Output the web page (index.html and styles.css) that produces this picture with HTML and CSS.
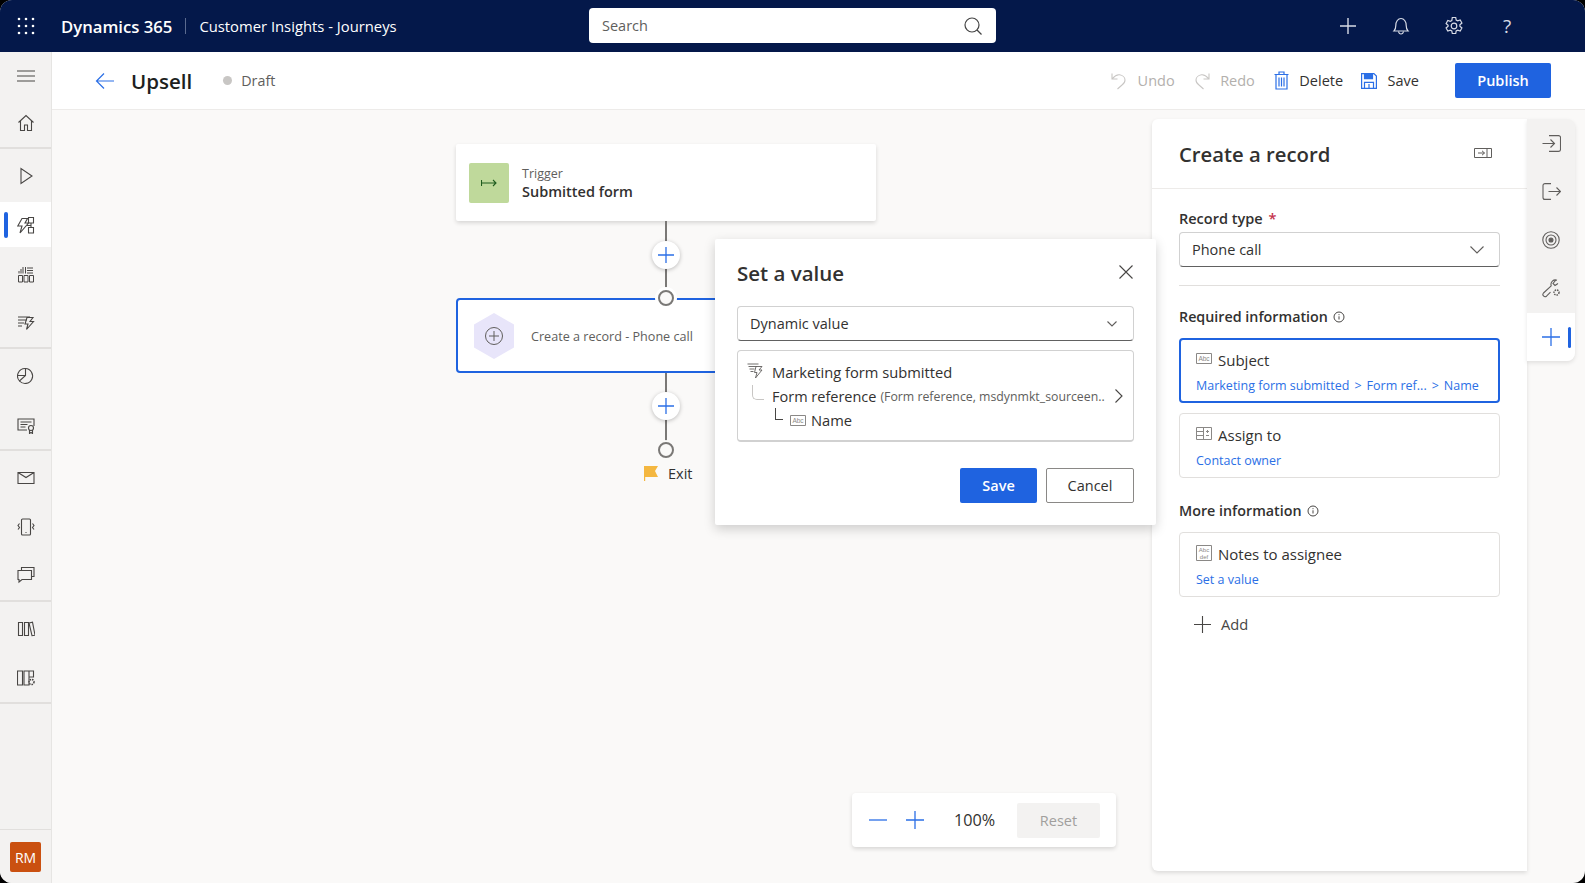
FILE: index.html
```html
<!DOCTYPE html>
<html lang="en">

<head>
    <meta charset="UTF-8">
    <title>Upsell - Customer Insights - Journeys</title>
    <link rel="stylesheet" href="styles.css">
</head>

<body>
    <div class="app">
        <header class="topbar">
            <svg class="waffle" width="18" height="18" viewBox="0 0 18 18" fill="#fff">
                <circle cx="2" cy="2" r="1.3"/><circle cx="9" cy="2" r="1.3"/><circle cx="16" cy="2" r="1.3"/>
                <circle cx="2" cy="9" r="1.3"/><circle cx="9" cy="9" r="1.3"/><circle cx="16" cy="9" r="1.3"/>
                <circle cx="2" cy="16" r="1.3"/><circle cx="9" cy="16" r="1.3"/><circle cx="16" cy="16" r="1.3"/>
            </svg>
            <span class="brand">Dynamics 365</span>
            <span class="brand-sep"></span>
            <span class="app-name">Customer Insights - Journeys</span>
            <div class="search">
                <span>Search</span>
                <svg width="20" height="20" viewBox="0 0 20 20" fill="none" stroke="#444" stroke-width="1.2"><circle cx="9" cy="9" r="7"/><path d="M14 14l4.500 4.500"/></svg>
            </div>
            <div class="top-actions">
                <svg width="20" height="20" viewBox="0 0 20 20" fill="none" stroke="#d8dbe6" stroke-width="1.4"><path d="M10 2v16M2 10h16"/></svg>
                <svg width="20" height="20" viewBox="0 0 20 20" fill="none" stroke="#d8dbe6" stroke-width="1.2"><path d="M3 15c1.500-1.500 1.800-3 1.800-5.500C4.800 5.500 7 2.500 10 2.500s5.200 3 5.200 7c0 2.500.3 4 1.800 5.500z"/><path d="M7.500 15.500c.3 1.500 1.200 2.500 2.500 2.500s2.200-1 2.500-2.500"/></svg>
                <svg width="20" height="20" viewBox="0 0 20 20" fill="none" stroke="#d8dbe6" stroke-width="1.2"><circle cx="10" cy="10" r="2.800"/><path d="M8.300 1.500h3.400l.5 2.600 1.500.8 2.500-.9 1.700 3-2 1.700v1.600l2 1.700-1.700 3-2.500-.9-1.500.8-.5 2.600H8.300l-.5-2.600-1.500-.8-2.500.9-1.700-3 2-1.700V9.200l-2-1.700 1.700-3 2.500.9 1.500-.8z"/></svg>
                <span class="help">?</span>
            </div>
        </header>

        <div class="workspace">
            <nav class="sidebar">
                <div class="nav-group nav-group-top">
                    <div class="nav-item nav-menu">
                        <svg width="18" height="12" viewBox="0 0 18 12" stroke="#484644" stroke-width="1.1"><path d="M0 1h18M0 6h18M0 11h18"/></svg>
                    </div>
                    <div class="nav-item">
                        <svg width="18" height="18" viewBox="0 0 18 18" fill="none" stroke="#484644" stroke-width="1.1"><path d="M1.500 8.500L9 1.500l7.500 7M3.500 7v9.500h4V11h3v5.500h4V7"/></svg>
                    </div>
                </div>
                <div class="nav-group">
                    <div class="nav-item">
                        <svg width="18" height="18" viewBox="0 0 18 18" fill="none" stroke="#484644" stroke-width="1.1"><path d="M4 1.500v15l11-7.500z"/></svg>
                    </div>
                    <div class="nav-item nav-active">
                        <svg width="18" height="18" viewBox="0 0 18 18" fill="none" stroke="#484644" stroke-width="1.1"><path d="M5 2.500h5.500L8 7h3.500L3 17l2-7H.8z"/><path d="M11.500 1.500h5V7h-5zM11.500 11.500h5V17h-5zM14 7v4.500M10 9.500h4"/></svg>
                    </div>
                    <div class="nav-item">
                        <svg width="18" height="18" viewBox="0 0 18 18" fill="none" stroke="#484644" stroke-width="1"><path d="M1.500 10.500h4v6.500h-4zM7 10.500h4v6.500H7zM12.500 10.500h4v6.500h-4zM2 8.500V6M4 8.500V4M6 8.500V2M8.500 2v6.500M10 3h6M10 5.500h6M10 8h6"/></svg>
                    </div>
                    <div class="nav-item">
                        <svg width="18" height="18" viewBox="0 0 18 18" fill="none" stroke="#484644" stroke-width="1.1"><path d="M1 3h12M1 6h9M1 9h6M1 12h4M10 3.500h6l-3 4h3.500l-7 8 1.500-5.500H8z"/></svg>
                    </div>
                </div>
                <div class="nav-group">
                    <div class="nav-item">
                        <svg width="18" height="18" viewBox="0 0 18 18" fill="none" stroke="#484644" stroke-width="1.1"><path d="M8.500 1.500a7.500 7.500 0 1 1-6 12.500"/><path d="M8.500 1.500v7L2.500 14A7.500 7.500 0 0 1 8.500 1.500zM1 8.500h7.500"/></svg>
                    </div>
                    <div class="nav-item">
                        <svg width="18" height="18" viewBox="0 0 18 18" fill="none" stroke="#484644" stroke-width="1.1"><path d="M10 14H1V3h16v7M3.500 6h11M3.500 8.500h7M3.500 11h5"/><circle cx="14" cy="12" r="2.500"/><path d="M12.500 14v3.500l1.500-1 1.500 1V14"/></svg>
                    </div>
                </div>
                <div class="nav-group">
                    <div class="nav-item">
                        <svg width="18" height="18" viewBox="0 0 18 18" fill="none" stroke="#484644" stroke-width="1.1"><path d="M1 3.500h16v11H1zM1 3.500l8 5 8-5"/></svg>
                    </div>
                    <div class="nav-item">
                        <svg width="18" height="18" viewBox="0 0 18 18" fill="none" stroke="#484644" stroke-width="1.1"><rect x="4.500" y="1" width="9" height="16" rx="1"/><path d="M8.500 14.500h1M2.500 5.500L1 7.500l1.500 2-1.500 2M15.500 5.500l1.500 2-1.500 2 1.500 2"/></svg>
                    </div>
                    <div class="nav-item">
                        <svg width="18" height="18" viewBox="0 1.500 18 18" fill="none" stroke="#484644" stroke-width="1.1"><path d="M4.500 5V2H17v9h-2.500"/><path d="M1 5h13.500v9H5l-3 2.500V14H1z"/></svg>
                    </div>
                </div>
                <div class="nav-group">
                    <div class="nav-item">
                        <svg width="18" height="18" viewBox="0 0 18 18" fill="none" stroke="#484644" stroke-width="1.1"><path d="M1.500 2.500h4v13h-4zM7.500 2.500h4v13h-4zM12 3l3.500-.8 2.500 13-3 .5z"/></svg>
                    </div>
                    <div class="nav-item">
                        <svg width="18" height="18" viewBox="0 0 18 18" fill="none" stroke="#484644" stroke-width="1.1"><path d="M.5 2h5v14h-5zM7 2h5v14H7zM12 2h4.500v6H12z"/><circle cx="14.500" cy="13" r="2.500" stroke-width="1.500" stroke-dasharray="1.500 .9"/></svg>
                    </div>
                </div>
                <div class="nav-spacer"></div>
                <div class="nav-user"><span class="avatar">RM</span></div>
            </nav>

            <main class="main">
                <div class="page-header">
                    <svg class="back" width="20" height="18" viewBox="0 0 20 18" fill="none" stroke="#2b6fe6" stroke-width="1.200"><path d="M19 9H1.500M9 1.500L1.500 9 9 16.500"/></svg>
                    <h1 class="page-title">Upsell</h1>
                    <span class="status-dot"></span>
                    <span class="status">Draft</span>
                    <div class="commands">
                        <span class="cmd cmd-off">
                            <svg width="16" height="18" viewBox="0 0 16 18" fill="none" stroke="#c8c6c4" stroke-width="1.1"><path d="M1 1.500v5.500h5.500M1.500 6.500C4 3.500 6 2.500 8.500 2.800c3 .4 5.500 2.500 5.500 5.200 0 2.500-1.500 4-3 5l-4.500 4"/></svg>
                            Undo
                        </span>
                        <span class="cmd cmd-off">
                            <svg width="16" height="18" viewBox="0 0 16 18" fill="none" stroke="#c8c6c4" stroke-width="1.1"><path d="M15 1.500v5.500H9.500M14.500 6.500C12 3.500 10 2.500 7.500 2.800 4.500 3.200 2 5.300 2 8c0 2.500 1.500 4 3 5l4.500 4"/></svg>
                            Redo
                        </span>
                        <span class="cmd">
                            <svg width="15" height="19" viewBox="0 0 15 19" fill="none" stroke="#2b6fe6" stroke-width="1.2"><path d="M.5 3.500h14M5 3.500V1h5v2.500M2 3.500v14.500h11V3.500M5 6.500v9M7.500 6.500v9M10 6.500v9"/></svg>
                            Delete
                        </span>
                        <span class="cmd">
                            <svg width="16" height="16" viewBox="0 0 16 16" fill="none" stroke="#2b6fe6" stroke-width="1.2"><path d="M.6.600h12.300l2.500 2.500v12.300H.6z"/><path d="M3.500.6v5h8v-5" fill="#2b6fe6"/><path d="M3.500 15.400v-6h9v6M8 11v4"/></svg>
                            Save
                        </span>
                        <button class="btn-primary btn-publish">Publish</button>
                    </div>
                </div>

                <div class="canvas">
                    <section class="flow">
                        <div class="node node-trigger">
                            <span class="trigger-icon">
                                <svg width="16" height="8" viewBox="0 0 16 8" fill="none" stroke="#1f5c1f" stroke-width="1.100"><path d="M.5 1v6M1 4h14M12 1l3 3-3 3"/></svg>
                            </span>
                            <div>
                                <div class="node-kicker">Trigger</div>
                                <div class="node-title">Submitted form</div>
                            </div>
                        </div>
                        <div class="node node-action">
                            <svg class="hex" width="40" height="46" viewBox="0 0 40 46">
                                <path d="M20 0l20 11.500v23L20 46 0 34.500v-23z" fill="#e8e5fa"/>
                                <circle cx="20" cy="23" r="8.500" fill="none" stroke="#605e5c" stroke-width="1"/>
                                <path d="M20 18v10M15 23h10" stroke="#605e5c" stroke-width="1"/>
                            </svg>
                            <span class="node-label">Create a record - Phone call</span>
                        </div>
                        <span class="line line-1"></span>
                        <span class="line line-2"></span>
                        <span class="add-step step-1"><svg width="16" height="16" viewBox="0 0 16 16" stroke="#2b6fe6" stroke-width="1.300"><path d="M8 0v16M0 8h16"/></svg></span>
                        <span class="add-step step-2"><svg width="16" height="16" viewBox="0 0 16 16" stroke="#2b6fe6" stroke-width="1.300"><path d="M8 0v16M0 8h16"/></svg></span>
                        <span class="ring ring-1"></span>
                        <span class="ring ring-2"></span>
                        <div class="exit">
                            <svg width="15" height="15" viewBox="0 0 15 15"><path d="M0 0h14l-3 5 3 6H1.200v4H0z" fill="#f4b740"/></svg>
                            <span>Exit</span>
                        </div>
                        <div class="zoom-bar">
                            <svg width="18" height="2" viewBox="0 0 18 2" stroke="#2b6fe6" stroke-width="1.300"><path d="M0 1h18"/></svg>
                            <svg class="zoom-plus" width="18" height="18" viewBox="0 0 18 18" stroke="#2b6fe6" stroke-width="1.300"><path d="M9 0v18M0 9h18"/></svg>
                            <span class="zoom-value">100%</span>
                            <span class="zoom-reset">Reset</span>
                        </div>
                    </section>

                    <aside class="panel">
                        <div class="panel-head">
                            <h2>Create a record</h2>
                            <svg class="panel-expand" width="18" height="10" viewBox="0 0 18 10" fill="none" stroke="#605e5c" stroke-width="1"><path d="M.5.500h17v9H.5zM13 .5v9M4 5h6.500M8 2.800L10.500 5 8 7.200"/></svg>
                        </div>
                        <div class="panel-body">
                            <label class="field-label">Record type <em>*</em></label>
                            <div class="select select-record">
                                <span>Phone call</span>
                                <svg width="14" height="8" viewBox="0 0 14 8" fill="none" stroke="#605e5c" stroke-width="1.100"><path d="M.5.500L7 7l6.500-6.500"/></svg>
                            </div>
                            <hr class="panel-rule">
                            <h3 class="section-title">Required information
                                <svg width="12" height="12" viewBox="0 0 12 12" fill="none" stroke="#484644"><circle cx="6" cy="6" r="5"/><path d="M6 5.300v3.200M6 3.200v1"/></svg>
                            </h3>
                            <div class="param param-selected">
                                <div class="param-name">
                                    <svg width="16" height="11" viewBox="0 0 16 11" fill="none" stroke="#8a8886"><path d="M.5.500h15v10H.5z"/><text x="8" y="8" font-size="6.500" text-anchor="middle" fill="#8a8886" stroke="none" font-family="Liberation Sans">Abc</text></svg>
                                    Subject
                                </div>
                                <div class="param-value">Marketing form submitted<span class="crumb-sep">&gt;</span>Form ref...<span class="crumb-sep">&gt;</span>Name</div>
                            </div>
                            <div class="param">
                                <div class="param-name">
                                    <svg width="16" height="13" viewBox="0 0 16 13" fill="none" stroke="#8a8886"><path d="M.5.500h15v12H.5zM.5 4.500h7M.5 8.500h7M7.500.5v12M10 4.500h3M11.500 3v3M10 8.500h3"/></svg>
                                    Assign to
                                </div>
                                <div class="param-value">Contact owner</div>
                            </div>
                            <h3 class="section-title section-more">More information
                                <svg width="12" height="12" viewBox="0 0 12 12" fill="none" stroke="#484644"><circle cx="6" cy="6" r="5"/><path d="M6 5.300v3.200M6 3.200v1"/></svg>
                            </h3>
                            <div class="param">
                                <div class="param-name">
                                    <svg width="16" height="16" viewBox="0 0 16 16" fill="none" stroke="#8a8886"><path d="M.5.500h15v15H.5z"/><text x="8" y="7" font-size="6" text-anchor="middle" fill="#8a8886" stroke="none" font-family="Liberation Sans">Abc</text><text x="8" y="13.500" font-size="6" text-anchor="middle" fill="#8a8886" stroke="none" font-family="Liberation Sans">def</text></svg>
                                    Notes to assignee
                                </div>
                                <div class="param-value">Set a value</div>
                            </div>
                            <div class="add-row">
                                <svg width="17" height="17" viewBox="0 0 17 17" stroke="#484644" stroke-width="1.100"><path d="M8.500 0v17M0 8.500h17"/></svg>
                                Add
                            </div>
                        </div>
                    </aside>

                    <aside class="rail">
                        <div class="rail-item">
                            <svg width="19" height="17" viewBox="0 0 19 17" fill="none" stroke="#605e5c" stroke-width="1.100"><path d="M7 .6h9.500a2 2 0 0 1 2 2v11.800a2 2 0 0 1-2 2H7M.5 8.500h12M8.500 4.500l4 4-4 4"/></svg>
                        </div>
                        <div class="rail-item">
                            <svg width="19" height="17" viewBox="0 0 19 17" fill="none" stroke="#605e5c" stroke-width="1.100"><path d="M9 .6H3a2 2 0 0 0-2 2v11.800a2 2 0 0 0 2 2h6M6.500 8.500h12M14.500 4.500l4 4-4 4"/></svg>
                        </div>
                        <div class="rail-item">
                            <svg width="18" height="18" viewBox="0 0 18 18" fill="none" stroke="#605e5c" stroke-width="1.100"><circle cx="9" cy="9" r="8.200"/><circle cx="9" cy="9" r="5"/><circle cx="9" cy="9" r="2" fill="#605e5c"/></svg>
                        </div>
                        <div class="rail-item">
                            <svg width="19" height="19" viewBox="0 0 19 19" fill="none" stroke="#605e5c" stroke-width="1.100"><path d="M15 1.200a4.500 4.500 0 0 0-5.800 5.600L1.500 14a2.200 2.200 0 0 0 3 3.200l4-4M13.500 1.500L11 4.500l2 2 3-2"/><circle cx="14.500" cy="13.500" r="2.500" stroke-width="1.500" stroke-dasharray="1.500 .9"/></svg>
                        </div>
                        <div class="rail-item rail-active">
                            <svg width="18" height="18" viewBox="0 0 18 18" stroke="#2b6fe6" stroke-width="1.300"><path d="M9 0v18M0 9h18"/></svg>
                        </div>
                    </aside>

                    <div class="dialog">
                        <div class="dialog-head">
                            <h2>Set a value</h2>
                            <svg class="dialog-close" width="14" height="14" viewBox="0 0 14 14" stroke="#484644" stroke-width="1.100"><path d="M.5.500l13 13M13.500.5l-13 13"/></svg>
                        </div>
                        <div class="select select-dialog">
                            <span>Dynamic value</span>
                            <svg width="10" height="6" viewBox="0 0 10 6" fill="none" stroke="#605e5c" stroke-width="1.100"><path d="M.5.500L5 5 9.500.5"/></svg>
                        </div>
                        <div class="value-tree">
                            <div class="tree-row tree-first">
                                <svg width="16" height="16" viewBox="0 0 16 16" fill="none" stroke="#605e5c" stroke-width=".9"><path d="M.5 1h11M1.500 3.500h8M2.500 6h5M3.500 8.500h3M9 3.500h6l-3 3.500h3l-6.500 8 1.500-5.500H7.500z"/></svg>
                                <span>Marketing form submitted</span>
                            </div>
                            <div class="tree-row tree-second">
                                <span class="elbow elbow-soft"></span>
                                <span class="tree-ref">Form reference</span>
                                <span class="tree-note">(Form reference, msdynmkt_sourceen..</span>
                                <svg class="tree-chevron" width="8" height="14" viewBox="0 0 8 14" fill="none" stroke="#484644" stroke-width="1.100"><path d="M.5.500L7 7 .5 13.500"/></svg>
                            </div>
                            <div class="tree-row tree-third">
                                <span class="elbow"></span>
                                <svg width="16" height="11" viewBox="0 0 16 11" fill="none" stroke="#8a8886"><path d="M.5.500h15v10H.5z"/><text x="8" y="8" font-size="6.500" text-anchor="middle" fill="#8a8886" stroke="none" font-family="Liberation Sans">Abc</text></svg>
                                <span>Name</span>
                            </div>
                        </div>
                        <div class="dialog-actions">
                            <button class="btn-primary btn-save">Save</button>
                            <button class="btn-cancel">Cancel</button>
                        </div>
                    </div>
                </div>
            </main>
        </div>
    </div>
</body>

</html>
```

FILE: styles.css
```css
* {
    box-sizing: border-box;
}

html,
body {
    margin: 0;
    height: 100%;
    background: #000;
    overflow: hidden;
}

body {
    font-family: "Open Sans", "Noto Sans", Arial, sans-serif;
    color: #323130;
}

.app {
    width: 1585px;
    height: 883px;
    display: flex;
    flex-direction: column;
    overflow: hidden;
    border-radius: 12px;
    background: #faf9f8;
}

/* top bar */
.topbar {
    height: 52px;
    flex: none;
    display: flex;
    align-items: center;
    background: #04184a;
    color: #fff;
    padding-left: 17px;
    position: relative;
}

.brand {
    margin-left: 26px;
    font-size: 16.7px;
    font-weight: 600;
}

.brand-sep {
    width: 1px;
    height: 16px;
    margin: 0 13px;
    background: #5b6a8f;
}

.app-name {
    font-size: 14.8px;
}

.search {
    position: absolute;
    left: 589px;
    top: 8px;
    width: 407px;
    height: 35px;
    background: #fff;
    border-radius: 4px;
    color: #605e5c;
    font-size: 14.5px;
    display: flex;
    align-items: center;
    justify-content: space-between;
    padding: 0 13px;
}

.top-actions {
    position: absolute;
    left: 1338px;
    top: 16px;
    display: flex;
    align-items: center;
    gap: 33px;
}

.help {
    width: 20px;
    text-align: center;
    font-size: 19px;
    line-height: 20px;
    color: #d8dbe6;
}

/* left nav */
.workspace {
    flex: 1;
    display: flex;
    min-height: 0;
}

.sidebar {
    width: 52px;
    flex: none;
    background: #f3f2f1;
    border-right: 1px solid #e6e5e3;
    display: flex;
    flex-direction: column;
}

.nav-group {
    padding-top: 2px;
    border-bottom: 2px solid #e1dfdd;
}

.nav-group-top {
    padding-top: 0;
}

.nav-spacer {
    flex: 1;
}

.nav-item {
    height: 49px;
    display: flex;
    align-items: center;
    justify-content: center;
    position: relative;
}

.nav-group-top .nav-item {
    height: 48px;
}

.nav-group-top .nav-menu {
    height: 47px;
}

.nav-active {
    height: 45px;
    margin: 2px 0;
    background: #fff;
}

.nav-active::before {
    content: "";
    position: absolute;
    left: 4px;
    top: 10px;
    width: 4px;
    height: 26px;
    border-radius: 2px;
    background: #1f63e0;
}

.nav-user {
    height: 54px;
    border-top: 1px solid #e1dfdd;
    padding: 12px 0 0 10px;
}

.avatar {
    width: 31px;
    height: 30px;
    display: flex;
    align-items: center;
    justify-content: center;
    border-radius: 2px;
    background: #ca5010;
    color: #fff;
    font-size: 14px;
    font-weight: 500;
}

/* page header */
.main {
    flex: 1;
    display: flex;
    flex-direction: column;
    min-width: 0;
}

.page-header {
    height: 58px;
    flex: none;
    background: #fff;
    border-bottom: 1px solid #edebe9;
    display: flex;
    align-items: center;
    padding-left: 43px;
}

.back {
    margin-right: 16px;
}

.page-title {
    margin: 0 31px 0 0;
    font-size: 20.5px;
    font-weight: 600;
    color: #201f1e;
}

.status-dot {
    width: 9px;
    height: 9px;
    border-radius: 50%;
    background: #c8c6c4;
    margin-right: 9px;
}

.status {
    font-size: 14.3px;
    color: #605e5c;
}

.commands {
    margin-left: auto;
    margin-right: 34px;
    display: flex;
    align-items: center;
    gap: 18px;
    font-size: 14.5px;
}

.cmd {
    display: flex;
    align-items: center;
    gap: 10.5px;
}

.cmd-off {
    color: #b3b0ad;
    margin-right: 1px;
}

.btn-primary {
    border: 0;
    border-radius: 2px;
    background: #1f63e0;
    color: #fff;
    font: 600 14.5px "Open Sans", "Noto Sans", Arial, sans-serif;
}

.btn-publish {
    width: 96px;
    height: 35px;
    margin-left: 18px;
}

/* canvas */
.canvas {
    flex: 1;
    display: flex;
    position: relative;
    min-height: 0;
    padding: 9px 10px 12px 0;
}

.flow {
    flex: 1;
    position: relative;
    margin-top: -9px;
    margin-bottom: -12px;
}

.node {
    position: absolute;
    left: 404px;
    width: 420px;
    background: #fff;
    border-radius: 2px;
    display: flex;
    align-items: center;
}

.node-trigger {
    top: 34px;
    height: 77px;
    padding-left: 13px;
    gap: 13px;
    box-shadow: 0 2px 4px rgba(0, 0, 0, .14);
}

.trigger-icon {
    width: 40px;
    height: 40px;
    border-radius: 2px;
    background: #bfd99b;
    display: flex;
    align-items: center;
    justify-content: center;
}

.node-kicker {
    font-size: 12.5px;
    color: #605e5c;
}

.node-title {
    font-size: 14.5px;
    font-weight: 600;
    color: #323130;
}

.node-action {
    top: 188px;
    height: 75px;
    padding-left: 16px;
    gap: 17px;
    border: 2px solid #1f63e0;
    border-radius: 4px;
}

.node-label {
    margin-top: 2px;
    font-size: 12.6px;
    color: #605e5c;
}

.line {
    position: absolute;
    left: 613px;
    width: 2px;
    background: #7a7876;
}

.line-1 {
    top: 111px;
    height: 78px;
}

.line-2 {
    top: 263px;
    height: 78px;
}

.add-step {
    position: absolute;
    left: 600px;
    width: 28px;
    height: 28px;
    border-radius: 50%;
    background: #fff;
    box-shadow: 0 1px 4px rgba(0, 0, 0, .25);
    display: flex;
    align-items: center;
    justify-content: center;
}

.step-1 {
    top: 131px;
}

.step-2 {
    top: 282px;
}

.ring {
    position: absolute;
    left: 606px;
    width: 16px;
    height: 16px;
    border: 2px solid #7a7876;
    border-radius: 50%;
    background: #faf9f8;
    box-shadow: 0 0 0 3px #fff;
}

.ring-1 {
    top: 180px;
}

.ring-2 {
    top: 332px;
    box-shadow: 0 0 0 2px #faf9f8;
}

.exit {
    position: absolute;
    left: 592px;
    top: 354px;
    display: flex;
    align-items: center;
    gap: 9px;
    font-size: 14.5px;
    font-weight: 500;
}

.zoom-bar {
    position: absolute;
    left: 800px;
    top: 683px;
    width: 264px;
    height: 54px;
    background: #fff;
    border-radius: 4px;
    box-shadow: 0 2px 4px rgba(0, 0, 0, .14);
    display: flex;
    align-items: center;
    padding-left: 17px;
}

.zoom-plus {
    margin-left: 19px;
}

.zoom-value {
    margin-left: 30px;
    font-size: 16.2px;
    width: 43px;
}

.zoom-reset {
    margin-left: 20px;
    width: 83px;
    height: 35px;
    background: #f3f2f1;
    border-radius: 2px;
    color: #a19f9d;
    font-size: 14.5px;
    font-weight: 500;
    display: flex;
    align-items: center;
    justify-content: center;
}

/* right panel */
.panel {
    width: 375px;
    flex: none;
    background: #fff;
    border-radius: 6px 0 0 6px;
    box-shadow: 0 2px 4px rgba(0, 0, 0, .12);
    display: flex;
    flex-direction: column;
}

.panel-head {
    height: 70px;
    flex: none;
    border-bottom: 1px solid #edebe9;
    display: flex;
    align-items: center;
    justify-content: space-between;
    padding: 1px 35px 0 27px;
}

.panel-head h2 {
    margin: 0;
    font-size: 20.3px;
    font-weight: 600;
    color: #323130;
}

.panel-expand {
    margin-bottom: 2px;
}

.panel-body {
    padding: 20px 27px 0;
}

.field-label {
    display: block;
    font-size: 14.5px;
    font-weight: 600;
    margin-bottom: 4px;
}

.field-label em {
    color: #c4314b;
    font-style: normal;
    margin-left: 2px;
}

.select {
    background: #fff;
    border: 1px solid #d1d1d1;
    border-bottom: 1px solid #616161;
    border-radius: 4px;
    display: flex;
    align-items: center;
    justify-content: space-between;
    font-size: 14.5px;
}

.select-record {
    height: 35px;
    padding: 0 15px 0 12px;
}

.panel-rule {
    border: 0;
    border-top: 1px solid #e1dfdd;
    margin: 18px 0 21px;
}

.section-title {
    margin: 0 0 12px;
    font-size: 14.3px;
    font-weight: 600;
    display: flex;
    align-items: center;
    gap: 5px;
}

.section-more {
    margin-top: 23px;
}

.param {
    height: 65px;
    border: 1px solid #e1dfdd;
    border-radius: 4px;
    padding: 8px 16px;
    margin-bottom: 10px;
}

.param-selected {
    border: 2px solid #1f63e0;
    padding: 7px 15px;
}

.param-name {
    display: flex;
    align-items: center;
    gap: 6px;
    font-size: 15px;
    font-weight: 500;
    height: 26px;
}

.param-name svg {
    margin-top: -3px;
}

.param-value {
    font-size: 12.5px;
    color: #2b6fe6;
    margin-top: 4px;
    white-space: nowrap;
}

.crumb-sep {
    margin: 0 5px;
}

.add-row {
    display: flex;
    align-items: center;
    gap: 10px;
    padding: 7px 0 0 15px;
    font-size: 14.7px;
    font-weight: 500;
    color: #484644;
}

.rail {
    width: 48px;
    height: 242px;
    flex: none;
    background: #f3f2f1;
    border-radius: 0 8px 8px 0;
    box-shadow: 0 2px 4px rgba(0, 0, 0, .1);
    display: flex;
    flex-direction: column;
    overflow: hidden;
}

.rail-item {
    height: 48.5px;
    display: flex;
    align-items: center;
    justify-content: center;
    position: relative;
}

.rail-active {
    background: #fff;
}

.rail-active::after {
    content: "";
    position: absolute;
    right: 4px;
    top: 14px;
    width: 3px;
    height: 21px;
    border-radius: 2px;
    background: #1f63e0;
}

/* set a value dialog */
.dialog {
    position: absolute;
    left: 663px;
    top: 129px;
    width: 441px;
    height: 286px;
    background: #fff;
    border-radius: 2px;
    box-shadow: 0 4px 12px rgba(0, 0, 0, .18);
    padding: 0 22px;
}

.dialog-head {
    height: 67px;
    display: flex;
    align-items: center;
    justify-content: space-between;
}

.dialog-head h2 {
    margin: 0;
    font-size: 20.5px;
    font-weight: 600;
    color: #323130;
}

.dialog-close {
    margin: 0 1px 1px 0;
}

.select-dialog {
    height: 35px;
    padding: 0 16px 0 12px;
}

.value-tree {
    height: 92px;
    margin-top: 9px;
    border: 1px solid #d1d1d1;
    border-bottom-width: 2px;
    border-radius: 4px;
    padding: 9px 10px 9px 9px;
    font-size: 14.7px;
    position: relative;
}

.tree-row {
    height: 24px;
    display: flex;
    align-items: center;
    position: relative;
}

.tree-first {
    gap: 9px;
}

.tree-first svg {
    margin-top: -3px;
}

.tree-second {
    padding-left: 25px;
}

.tree-ref {
    font-size: 14.5px;
}

.tree-note {
    margin-left: 4px;
    font-size: 12.3px;
    color: #605e5c;
    white-space: nowrap;
}

.tree-chevron {
    position: absolute;
    right: 0;
}

.tree-third {
    padding-left: 43px;
    gap: 5px;
}

.elbow {
    position: absolute;
    left: 28px;
    top: 0;
    width: 8px;
    height: 12px;
    border-left: 1px solid #484644;
    border-bottom: 1px solid #484644;
}

.elbow-soft {
    left: 5px;
    top: 1px;
    width: 12px;
    height: 15px;
    border-color: #c8c6c4;
    border-bottom-left-radius: 5px;
}

.dialog-actions {
    margin-top: 26px;
    display: flex;
    justify-content: flex-end;
    gap: 9px;
}

.btn-save {
    width: 77px;
    height: 35px;
}

.btn-cancel {
    width: 88px;
    height: 35px;
    background: #fff;
    border: 1px solid #8a8886;
    border-radius: 2px;
    color: #323130;
    font: 500 14.5px "Open Sans", "Noto Sans", Arial, sans-serif;
}
```
